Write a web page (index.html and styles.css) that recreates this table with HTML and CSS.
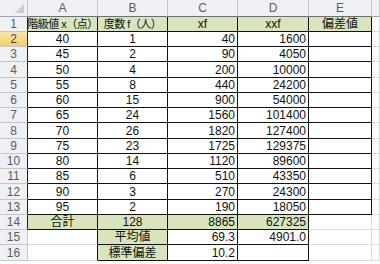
FILE: index.html
```html
<!DOCTYPE html>
<html lang="ja">
<head>
<meta charset="utf-8">
<link rel="stylesheet" href="styles.css">
</head>
<body>
<div class="sheet">
  <div class="c hd corner"><span class="tri"></span></div>
  <div class="c hd ch">A</div>
  <div class="c hd ch">B</div>
  <div class="c hd ch">C</div>
  <div class="c hd ch">D</div>
  <div class="c hd ch">E</div>
  <div class="c hd chx"></div>

  <div class="c hd rh rk">1</div>
  <div class="c k g sm">階級値 x（点）</div>
  <div class="c k g sm">度数 f（人）</div>
  <div class="c k g">xf</div>
  <div class="c k g">xxf</div>
  <div class="c k g">偏差値</div>
  <div class="c"></div>

  <div class="c hd rh rk sel">2</div>
  <div class="c k">40</div><div class="c k">1</div><div class="c k r">40</div><div class="c k r">1600</div><div class="c k"></div><div class="c"></div>

  <div class="c hd rh rk">3</div>
  <div class="c k">45</div><div class="c k">2</div><div class="c k r">90</div><div class="c k r">4050</div><div class="c k"></div><div class="c"></div>

  <div class="c hd rh rk">4</div>
  <div class="c k">50</div><div class="c k">4</div><div class="c k r">200</div><div class="c k r">10000</div><div class="c k"></div><div class="c"></div>

  <div class="c hd rh rk">5</div>
  <div class="c k">55</div><div class="c k">8</div><div class="c k r">440</div><div class="c k r">24200</div><div class="c k"></div><div class="c"></div>

  <div class="c hd rh rk">6</div>
  <div class="c k">60</div><div class="c k">15</div><div class="c k r">900</div><div class="c k r">54000</div><div class="c k"></div><div class="c"></div>

  <div class="c hd rh rk">7</div>
  <div class="c k">65</div><div class="c k">24</div><div class="c k r">1560</div><div class="c k r">101400</div><div class="c k"></div><div class="c"></div>

  <div class="c hd rh rk">8</div>
  <div class="c k">70</div><div class="c k">26</div><div class="c k r">1820</div><div class="c k r">127400</div><div class="c k"></div><div class="c"></div>

  <div class="c hd rh rk">9</div>
  <div class="c k">75</div><div class="c k">23</div><div class="c k r">1725</div><div class="c k r">129375</div><div class="c k"></div><div class="c"></div>

  <div class="c hd rh rk">10</div>
  <div class="c k">80</div><div class="c k">14</div><div class="c k r">1120</div><div class="c k r">89600</div><div class="c k"></div><div class="c"></div>

  <div class="c hd rh rk">11</div>
  <div class="c k">85</div><div class="c k">6</div><div class="c k r">510</div><div class="c k r">43350</div><div class="c k"></div><div class="c"></div>

  <div class="c hd rh rk">12</div>
  <div class="c k">90</div><div class="c k">3</div><div class="c k r">270</div><div class="c k r">24300</div><div class="c k"></div><div class="c"></div>

  <div class="c hd rh rk">13</div>
  <div class="c k">95</div><div class="c k">2</div><div class="c k r">190</div><div class="c k r">18050</div><div class="c k"></div><div class="c"></div>

  <div class="c hd rh rk">14</div>
  <div class="c k g">合計</div><div class="c k g">128</div><div class="c k g r">8865</div><div class="c k g r">627325</div><div class="c"></div><div class="c"></div>

  <div class="c hd rh">15</div>
  <div class="c kr"></div><div class="c k g">平均値</div><div class="c k r">69.3</div><div class="c k r">4901.0</div><div class="c"></div><div class="c"></div>

  <div class="c hd rh">16</div>
  <div class="c kr"></div><div class="c k g">標準偏差</div><div class="c k r">10.2</div><div class="c k"></div><div class="c"></div><div class="c"></div>
</div>
</body>
</html>
```
FILE: styles.css
```css
html, body {
  margin: 0;
  padding: 0;
  background: #ffffff;
}
body {
  width: 380px;
  height: 264px;
  overflow: hidden;
  font-family: "Liberation Sans", "Noto Sans CJK JP", sans-serif;
  font-size: 12px;
  color: #111111;
}
.sheet {
  display: grid;
  grid-template-columns: 28px 70px 70px 70px 71px 63px 1fr;
  grid-template-rows: 17px 15px 15px 15px 16px 15px 15px 15px 16px 15px 15px 15px 16px 15px 15px 15px 16px 16px;
}
.c {
  box-sizing: border-box;
  border-right: 1px solid #dadcdd;
  border-bottom: 1px solid #dadcdd;
  display: flex;
  align-items: center;
  justify-content: center;
  white-space: nowrap;
  overflow: hidden;
  line-height: 1;
}
.hd {
  background: #eef0f3;
  color: #5c5c5c;
  border-right-color: #c2c7ce;
  border-bottom-color: #c2c7ce;
  font-size: 12px;
}
.ch {
  border-bottom-color: #6f6f6f;
}
.chx {
  border-bottom-color: #9ea5ad;
}
.corner {
  position: relative;
  border-bottom-color: #9ea5ad;
}
.tri {
  position: absolute;
  right: 3px;
  bottom: 3px;
  width: 0;
  height: 0;
  border-left: 9px solid transparent;
  border-bottom: 9px solid #c9ccd0;
}
.rh {
  justify-content: center;
}
.rk {
  border-right-color: #222222;
}
.sel {
  background: linear-gradient(#f9e6a6, #f6cf6a);
  color: #444444;
}
.k {
  border-right-color: #111111;
  border-bottom-color: #111111;
}
.kr {
  border-right-color: #111111;
}
.g {
  background: #d7e4bc;
}
.r {
  justify-content: flex-end;
  padding-right: 2px;
}
.sm {
  font-size: 11px;
  letter-spacing: -0.5px;
}
```
